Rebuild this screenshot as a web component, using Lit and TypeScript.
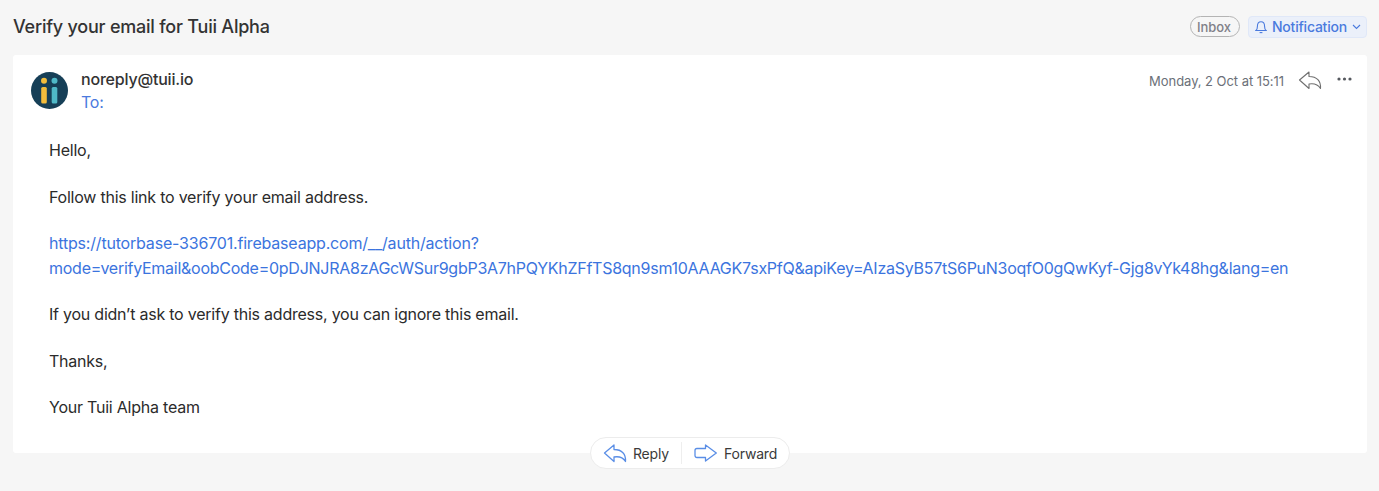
import { LitElement, html, css } from 'lit';
import { customElement } from 'lit/decorators.js';

const replyPath = 'M11 2 L1.5 10 L11 18.5 V14 C15.5 13.2 20 14.5 22.5 18.5 C23 11 19 6.5 11 6.5 Z';

@customElement('app-root')
export class AppRoot extends LitElement {
  static styles = css`
    :host {
      display: block;
      height: 491px;
      background: #f6f6f6;
      font-family: Inter, 'Liberation Sans', sans-serif;
      color: #2b2b2b;
      overflow: hidden;
    }

    .top {
      height: 55px;
      box-sizing: border-box;
      padding: 0 12px 2px 13px;
      display: flex;
      align-items: center;
    }

    .subject {
      flex: 1;
      font-size: 18px;
      font-weight: 500;
      letter-spacing: -0.22px;
      color: #333;
    }

    .inbox {
      height: 21px;
      box-sizing: border-box;
      width: 50px;
      margin-right: 8px;
      padding-right: 2px;
      border: 1px solid #b4b4b4;
      border-radius: 11px;
      font-size: 13px;
      font-weight: 500;
      color: #808088;
      display: flex;
      align-items: center;
      justify-content: center;
    }

    .notify {
      height: 22px;
      width: 119px;
      box-sizing: border-box;
      padding-left: 6px;
      border: 1px solid #e0e8f8;
      background: #ebf0fa;
      border-radius: 4px;
      color: #4a7ade;
      font-size: 14px;
      font-weight: 500;
      letter-spacing: -0.22px;
      display: flex;
      align-items: center;
    }

    .notify .bell {
      margin-right: 5px;
    }

    .notify .chev {
      margin-left: 5px;
    }

    .card {
      position: relative;
      margin: 0 12px 0 13px;
      height: 398px;
      box-sizing: border-box;
      background: #fff;
      border-radius: 3px;
      padding: 14px 15px 0 18px;
    }

    .head {
      display: flex;
      height: 52px;
    }

    .avatar {
      width: 37px;
      height: 37px;
      margin: 3px 13px 0 0;
      flex: none;
    }

    .who {
      flex: 1;
    }

    .from {
      font-size: 16px;
      font-weight: 500;
      line-height: 20px;
      letter-spacing: -0.2px;
      color: #333;
    }

    .to {
      font-size: 16px;
      line-height: 20px;
      letter-spacing: -0.23px;
      margin-top: 3px;
      color: #4a7ade;
    }

    .date {
      font-size: 13px;
      letter-spacing: -0.05px;
      color: #6b7078;
      line-height: 20px;
      margin: 2px 14px 0 0;
    }

    .head-icons {
      display: flex;
      align-items: flex-start;
    }

    .more {
      margin: 2px 0 0 15px;
    }

    .reply-icon {
      margin-top: 1px;
    }

    .body {
      padding: 17.3px 0 0 18px;
      font-size: 16px;
      line-height: 25px;
      letter-spacing: -0.23px;
    }

    .body p {
      margin: 0 0 21.4px;
    }

    .link {
      color: #3b74de;
    }

    .link-a {
      letter-spacing: -0.19px;
    }

    .link-b {
      letter-spacing: -0.26px;
    }

    .actions {
      position: absolute;
      left: 577px;
      top: 382px;
      width: 198px;
      height: 30px;
      background: #fff;
      border: 1px solid #ececec;
      border-radius: 16px;
      display: flex;
      align-items: center;
      font-size: 14px;
      letter-spacing: -0.2px;
      color: #3a3a3a;
    }

    .action {
      display: flex;
      align-items: center;
      gap: 6px;
    }

    .action.reply {
      padding-left: 12px;
      width: 78px;
    }

    .sep {
      width: 1px;
      height: 22px;
      background: #eee;
      margin-right: 12px;
    }

    .action.forward {
      gap: 7px;
    }
  `;

  render() {
    return html`
      <div class="top">
        <div class="subject">Verify your email for Tuii Alpha</div>
        <div class="inbox">Inbox</div>
        <div class="notify">
          <svg class="bell" width="12" height="14" viewBox="0 0 12 14" fill="none" stroke="#4a7ade" stroke-width="1.1">
            <path d="M1 10.5 C2.2 9.5 2.4 8.5 2.4 6.5 C2.4 3.8 3.8 1.8 6 1.8 C8.2 1.8 9.6 3.8 9.6 6.5 C9.6 8.5 9.8 9.5 11 10.5 Z" />
            <path d="M4.6 12.6 H7.4" />
          </svg>
          Notification
          <svg class="chev" width="9" height="6" viewBox="0 0 9 6" fill="none" stroke="#4a7ade" stroke-width="1.1">
            <path d="M1 1 L4.5 4.5 L8 1" />
          </svg>
        </div>
      </div>
      <div class="card">
        <div class="head">
          <svg class="avatar" viewBox="0 0 37 37">
            <circle cx="18.5" cy="18.5" r="18.5" fill="#163f57" />
            <circle cx="13" cy="8.8" r="3" fill="#f3bd3c" />
            <circle cx="23.5" cy="8.8" r="3" fill="#4fb9c8" />
            <rect x="10.2" y="15" width="5.6" height="16.5" rx="1.5" fill="#f3bd3c" />
            <rect x="20.7" y="15" width="5.6" height="16.5" rx="1.5" fill="#4fb9c8" />
          </svg>
          <div class="who">
            <div class="from">noreply@tuii.io</div>
            <div class="to">To:</div>
          </div>
          <div class="head-icons">
            <div class="date">Monday, 2 Oct at 15:11</div>
            <svg class="reply-icon" width="24" height="20" viewBox="0 0 24 20" fill="none" stroke="#6f6f6f" stroke-width="1.1" stroke-linejoin="round">
              <path d=${replyPath} />
            </svg>
            <svg class="more" width="15" height="16" viewBox="0 0 15 16" fill="#55585e">
              <circle cx="2" cy="8" r="1.6" />
              <circle cx="7.5" cy="8" r="1.6" />
              <circle cx="13" cy="8" r="1.6" />
            </svg>
          </div>
        </div>
        <div class="body">
          <p>Hello,</p>
          <p>Follow this link to verify your email address.</p>
          <p class="link">
            <span class="link-a">https://tutorbase-336701.firebaseapp.com/__/auth/action?</span><br />
            <span class="link-b">mode=verifyEmail&amp;oobCode=0pDJNJRA8zAGcWSur9gbP3A7hPQYKhZFfTS8qn9sm10AAAGK7sxPfQ&amp;apiKey=AIzaSyB57tS6PuN3oqfO0gQwKyf-Gjg8vYk48hg&amp;lang=en</span>
          </p>
          <p>If you didn’t ask to verify this address, you can ignore this email.</p>
          <p>Thanks,</p>
          <p>Your Tuii Alpha team</p>
        </div>
        <div class="actions">
          <div class="action reply">
            <svg width="24" height="20" viewBox="0 0 24 20" fill="none" stroke="#5a8ee6" stroke-width="1.3" stroke-linejoin="round">
              <path d=${replyPath} />
            </svg>
            Reply
          </div>
          <div class="sep"></div>
          <div class="action forward">
            <svg width="23" height="20" viewBox="0 0 23 20" fill="none" stroke="#5a8ee6" stroke-width="1.3" stroke-linejoin="round">
              <path d="M11.5 2 L22.3 10 L11.5 18 V14.5 H3 C1.8 14.5 1 13.7 1 12.5 V7.5 C1 6.3 1.8 5.5 3 5.5 H11.5 Z" />
            </svg>
            Forward
          </div>
        </div>
      </div>
    `;
  }
}
